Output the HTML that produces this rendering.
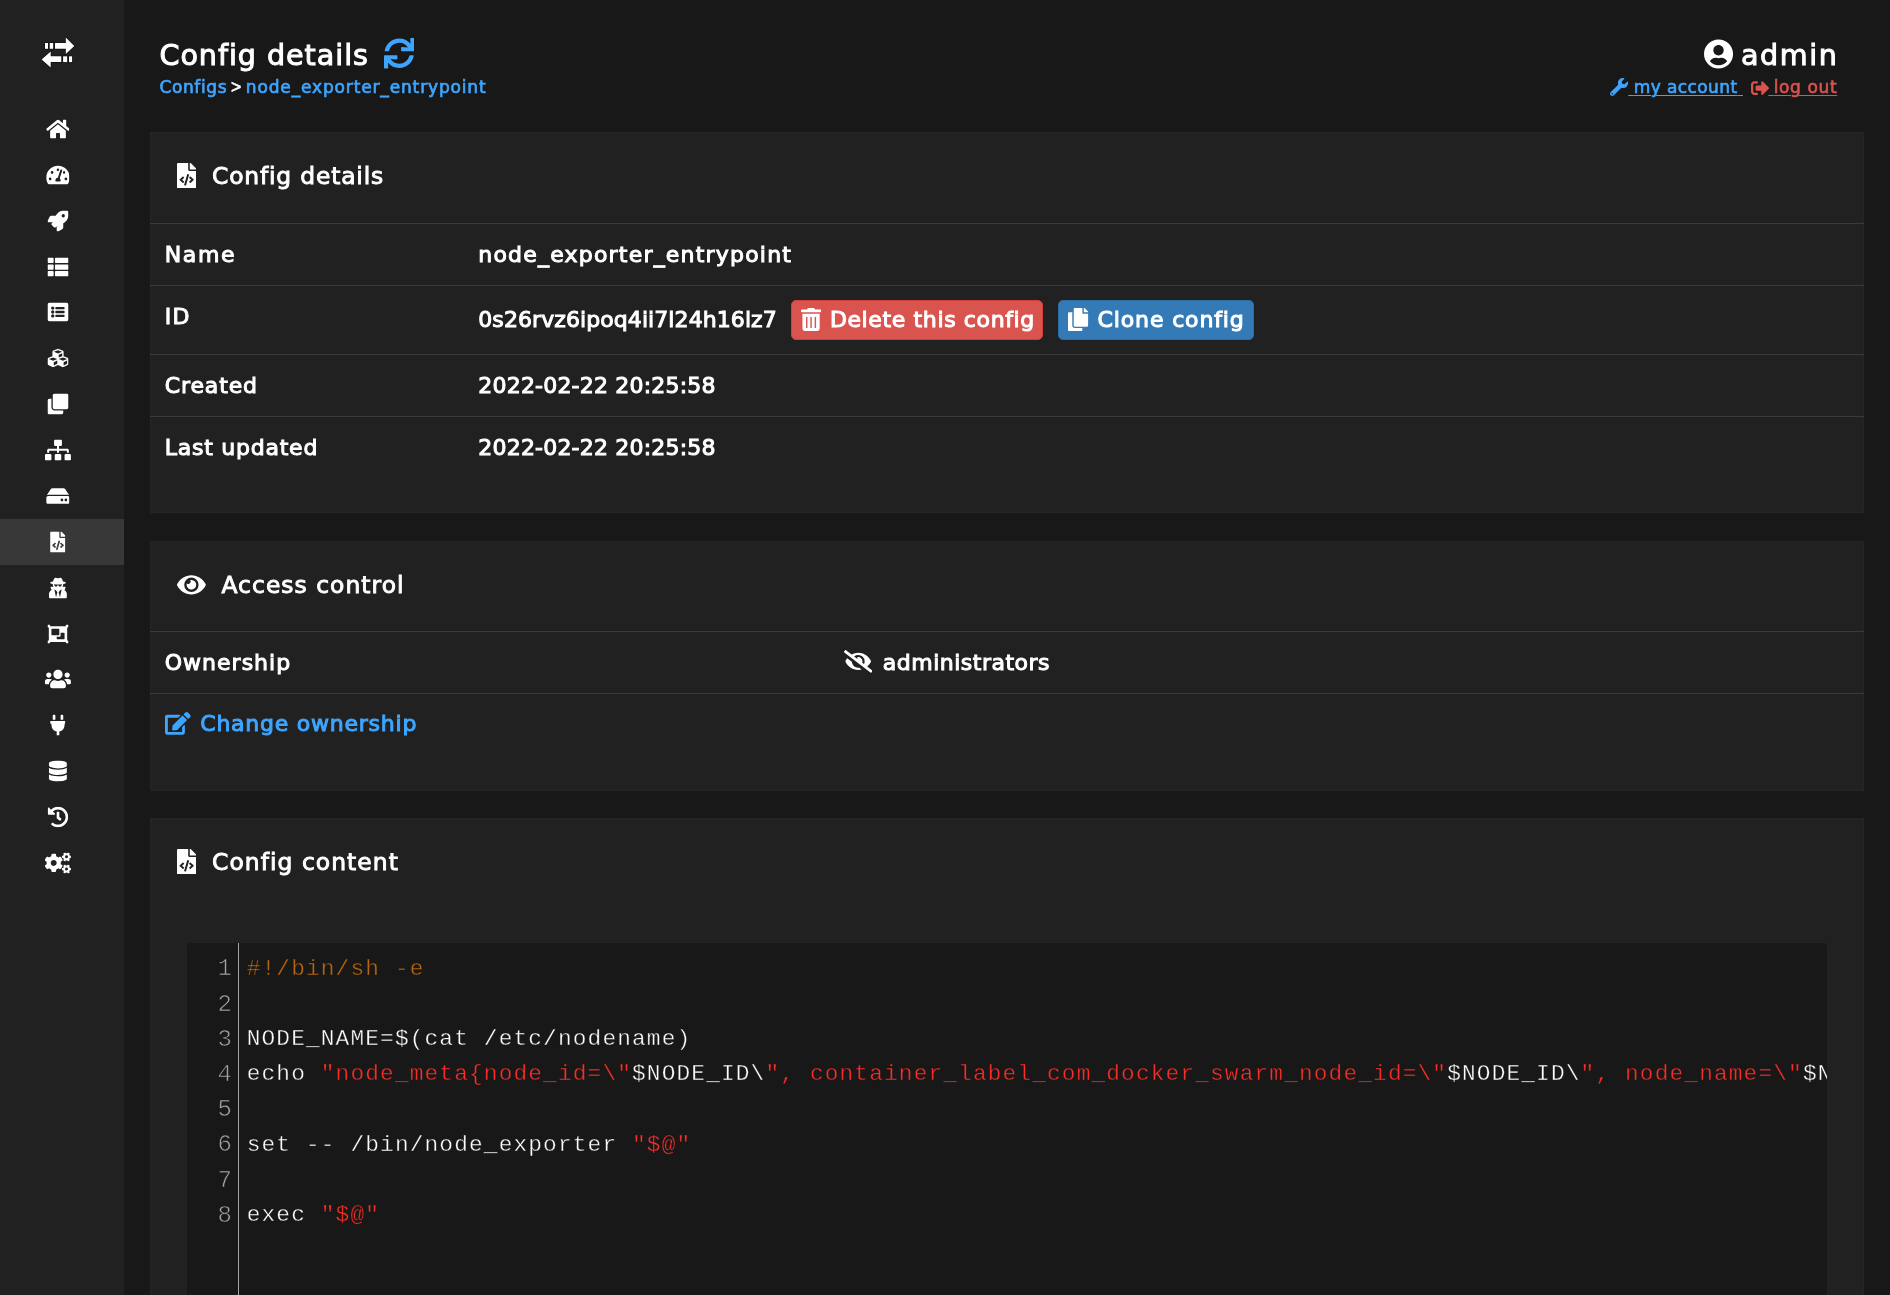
<!DOCTYPE html>
<html lang="en">
<head>
<meta charset="utf-8">
<title>Config details</title>
<style>
*{box-sizing:border-box}
html,body{margin:0;padding:0}
body{width:1890px;height:1295px;overflow:hidden;background:#181818;color:#fff;will-change:transform;
  font-family:"DejaVu Sans","Liberation Sans",sans-serif;font-size:22.75px;line-height:1.42857}
a{color:#3ea5ff;text-decoration:none}
svg{display:block}
/* ---------- sidebar ---------- */
#sidebar{position:absolute;left:0;top:0;width:124px;height:1295px;background:#212121}
#sidebar .logo{position:absolute;left:34px;top:30px;width:50px;height:46px}
#sidebar ul{list-style:none;margin:0;padding:0;position:absolute;left:0;top:106px;width:124px}
#sidebar li{height:45.875px;position:relative}
#sidebar li.active{background:#383838}
#sidebar li a{display:block;height:100%}
#sidebar li svg{position:absolute;left:50%;top:50%;transform:translate(-50%,-50%);margin-left:-4.5px}
/* ---------- header ---------- */
#main{position:absolute;left:124px;top:0;width:1766px;height:1295px}
#header{position:absolute;left:0;top:0;width:1766px;height:132px}
#header h1{position:absolute;left:35.5px;top:34px;margin:0;font-weight:400;font-size:28.6px;line-height:42px;letter-spacing:.95px;white-space:nowrap;-webkit-text-stroke:1px #fff}
#header h1 svg{position:absolute;left:224.2px;top:4.3px}
#header .crumbs{position:absolute;left:35.5px;top:74.4px;font-size:17px;line-height:26px;white-space:nowrap;-webkit-text-stroke:.7px}
#header .crumbs .sep{display:inline-block;margin:0 4.5px 0 4px;font-family:"Liberation Sans",sans-serif;font-size:17.5px;-webkit-text-stroke:.6px;color:#fff}
#header .user{position:absolute;left:0;top:0;width:1766px;height:132px;white-space:nowrap}
#header .user .name{position:absolute;left:1579.5px;top:34px;font-size:28.6px;line-height:42px;-webkit-text-stroke:1px #fff}
#header .user .name svg{position:absolute;left:0;top:4.5px}
#header .user .name span{position:absolute;left:37.5px;top:0;letter-spacing:1.6px}
#header .user .links a{position:absolute;top:74.4px;font-size:17px;line-height:26px;white-space:pre;text-decoration:underline;text-decoration-thickness:1.3px;text-underline-offset:2.2px;-webkit-text-stroke:.65px}
#header .user .links a svg{position:absolute;top:4px}
#header .user .links a.acc{left:1504.3px}
#header .user .links a.acc svg{left:-18.5px}
#header .user .links a.out{left:1644.3px;color:#d9534f}
#header .user .links a.out svg{left:-17.5px;top:5px}
/* ---------- panels ---------- */
.panel{position:absolute;left:25.5px;width:1714.5px;background:#212121;box-shadow:inset 0 0 0 1.5px #252525}
.panel .hd{height:92.4px;border-bottom:1px solid #3a3a3a;position:relative;font-size:23.4px;letter-spacing:.75px;-webkit-text-stroke:.9px #fff}
.panel .hd svg{position:absolute;left:27.5px;top:31px}
.panel .hd span{position:absolute;left:62.5px;top:27.4px;white-space:nowrap;line-height:34px}
table{border-collapse:collapse;width:100%;table-layout:fixed}
td{padding:0 0 0 15.3px;vertical-align:top;font-weight:400;font-size:22px;letter-spacing:.7px;-webkit-text-stroke:1px;white-space:nowrap;border-bottom:1px solid #3a3a3a}
tr:last-child td{border-bottom:0}
td .t{display:inline-block;line-height:32px;margin-top:14.6px}
td .t.id{margin-top:17.4px}
td{position:relative}
td svg.es{position:absolute;left:16.5px;top:18.5px}
td svg.ed{position:absolute;left:15.5px;top:17.5px}
.hd svg.fc3{top:30.3px}
.hd svg.eye{top:30.4px;left:27.5px}
.btn{position:absolute;top:14px;height:40px;border-radius:5px;color:#fff;font-weight:400;font-size:22px;-webkit-text-stroke:1.05px #fff;line-height:38px;border:1px solid transparent;white-space:nowrap}
.btn svg{position:absolute;left:9px;top:6.6px}
.btn span{position:absolute;left:38.2px;top:-.7px}
.btn-danger{background:#d9534f;border-color:#d43f3a}
.btn-primary{background:#337ab7;border-color:#2e6da4}
/* ---------- code ---------- */
.cm{position:absolute;left:37px;top:124.2px;width:1640.5px;height:400px;background:#181818;overflow:hidden;border-radius:4px 4px 0 0}
.cm .gutter{position:absolute;left:0;top:0;width:52px;height:100%;border-right:1px solid #a6a6a6;background:#181818}
.cm ol{list-style:none;margin:0;padding:9.2px 0 0 0}
.cm li{height:35.2px;position:relative;white-space:pre}
.cm li i{position:absolute;left:0;width:45.4px;text-align:right;font-style:normal;color:#a2a2a2;font-family:"Liberation Mono",monospace;font-size:24px;line-height:35.2px;top:-.4px;-webkit-text-stroke:.65px #181818}
.cm li code{position:absolute;left:60.2px;top:0;font-family:"Liberation Mono",monospace;font-size:22.8px;letter-spacing:1.14px;line-height:35.2px;color:#fff;-webkit-text-stroke:.4px #181818}
.cm .c{color:#b9650d}
.cm .s{color:#fb2d27}
</style>
</head>
<body>
<aside id="sidebar">
  <a class="logo" title="Swarmpit">
    <svg width="50" height="46" viewBox="34 30 50 46">
      <g fill="#fff" stroke="#0c0c0c" stroke-width="1.2" paint-order="stroke" stroke-linejoin="miter">
        <rect x="45" y="43" width="3" height="5.8"/>
        <rect x="49.7" y="43" width="3.5" height="5.8"/>
        <path d="M55 43H65.8V37.6L74.3 45.9L65.8 53.9V48.8H55Z"/>
        <path d="M41.6 59.4L50.7 51.5V56.3H61.3V62.1H50.7V67.5Z"/>
        <rect x="63.1" y="56.3" width="4.1" height="5.8"/>
        <rect x="69" y="56.3" width="3.1" height="5.8"/>
      </g>
    </svg>
  </a>
  <ul>
    <li><a><svg viewBox="0 0 576 512" width="23.62" height="21.0"><path fill="#fff" d="M280.37 148.26L96 300.11V464a16 16 0 0 0 16 16l112.06-.29a16 16 0 0 0 15.92-16V368a16 16 0 0 1 16-16h64a16 16 0 0 1 16 16v95.64a16 16 0 0 0 16 16.05L464 480a16 16 0 0 0 16-16V300L295.67 148.26a12.19 12.19 0 0 0-15.3 0zM571.6 251.47L488 182.56V44.05a12 12 0 0 0-12-12h-56a12 12 0 0 0-12 12v72.61L318.47 43a48 48 0 0 0-61 0L4.34 251.47a12 12 0 0 0-1.6 16.9l25.5 31A12 12 0 0 0 45.15 301l235.22-193.74a12.19 12.19 0 0 1 15.3 0L530.9 301a12 12 0 0 0 16.9-1.6l25.5-31a12 12 0 0 0-1.7-16.93z"/></svg></a></li>
    <li><a><svg viewBox="0 0 576 512" width="23.62" height="21.0"><path fill="#fff" d="M288 32C128.94 32 0 160.94 0 320c0 52.8 14.25 102.26 39.06 144.8 5.61 9.62 16.3 15.2 27.44 15.2h443c11.14 0 21.83-5.58 27.44-15.2C561.75 422.26 576 372.8 576 320c0-159.06-128.94-288-288-288zm0 64c14.71 0 26.58 10.13 30.32 23.65-1.11 2.26-2.64 4.23-3.45 6.67l-9.22 27.67c-5.13 3.49-10.97 6.01-17.64 6.01-17.67 0-32-14.33-32-32S270.33 96 288 96zM96 384c-17.67 0-32-14.33-32-32s14.33-32 32-32 32 14.33 32 32-14.33 32-32 32zm48-160c-17.67 0-32-14.33-32-32s14.33-32 32-32 32 14.33 32 32-14.33 32-32 32zm246.77-72.41l-61.33 184C343.13 347.33 352 364.54 352 384c0 11.72-3.38 22.55-8.88 32H232.88c-5.5-9.45-8.88-20.28-8.880-32 0-33.940 26.500-61.430 59.900-63.590l61.340-184.010c4.170-12.560 17.730-19.450 30.360-15.170 12.570 4.190 19.350 17.790 15.170 30.360zm14.660 57.200l15.520-46.550c3.470-1.290 7.130-2.230 11.050-2.230 17.670 0 32 14.330 32 32s-14.330 32-32 32c-11.380-.010-20.890-6.280-26.570-15.220zM480 384c-17.670 0-32-14.330-32-32s14.330-32 32-32 32 14.330 32 32-14.330 32-32 32z"/></svg></a></li>
    <li><a><svg viewBox="0 0 512 512" width="21.0" height="21.0"><path fill="#fff" d="M505.12019,19.09375c-1.18945-5.53125-6.65819-11-12.207-12.1875C460.716,0,435.507,0,410.40747,0,307.17523,0,245.26909,55.20312,199.05238,128H94.83772c-16.34763.01562-35.55658,11.875-42.88664,26.48438L2.51562,253.29688A28.4,28.4,0,0,0,0,264a24.00867,24.00867,0,0,0,24.00582,24H127.81618l-22.47457,22.46875c-11.36521,11.36133-12.99607,32.25781,0,45.25L156.24582,406.625c11.15623,11.1875,32.15619,13.15625,45.27726,0l22.47457-22.46875V488a24.00867,24.00867,0,0,0,24.00581,24,28.55934,28.55934,0,0,0,10.707-2.51562l98.72834-49.39063c14.62888-7.29687,26.50776-26.5,26.50776-42.85937V312.79688c72.59753-46.3125,128.03493-108.40626,128.03493-211.09376C512.07526,76.5,512.07526,51.29688,505.12019,19.09375ZM384.04033,168A40,40,0,1,1,424.05,128,40.02322,40.02322,0,0,1,384.04033,168Z"/></svg></a></li>
    <li><a><svg viewBox="0 0 512 512" width="21.0" height="21.0"><path fill="#fff" d="M149.333 216v80c0 13.255-10.745 24-24 24H24c-13.255 0-24-10.745-24-24v-80c0-13.255 10.745-24 24-24h101.333c13.255 0 24 10.745 24 24zM0 376v80c0 13.255 10.745 24 24 24h101.333c13.255 0 24-10.745 24-24v-80c0-13.255-10.745-24-24-24H24c-13.255 0-24 10.745-24 24zM125.333 32H24C10.745 32 0 42.745 0 56v80c0 13.255 10.745 24 24 24h101.333c13.255 0 24-10.745 24-24V56c0-13.255-10.745-24-24-24zm80 448H488c13.255 0 24-10.745 24-24v-80c0-13.255-10.745-24-24-24H205.333c-13.255 0-24 10.745-24 24v80c0 13.255 10.745 24 24 24zm-24-424v80c0 13.255 10.745 24 24 24H488c13.255 0 24-10.745 24-24V56c0-13.255-10.745-24-24-24H205.333c-13.255 0-24 10.745-24 24zm24 264H488c13.255 0 24-10.745 24-24v-80c0-13.255-10.745-24-24-24H205.333c-13.255 0-24 10.745-24 24v80c0 13.255 10.745 24 24 24z"/></svg></a></li>
    <li><a><svg viewBox="0 0 512 512" width="21.0" height="21.0"><path fill="#fff" d="M464 480H48c-26.51 0-48-21.49-48-48V80c0-26.51 21.49-48 48-48h416c26.51 0 48 21.49 48 48v352c0 26.51-21.49 48-48 48zM128 120c-22.091 0-40 17.909-40 40s17.909 40 40 40 40-17.909 40-40-17.909-40-40-40zm0 96c-22.091 0-40 17.909-40 40s17.909 40 40 40 40-17.909 40-40-17.909-40-40-40zm0 96c-22.091 0-40 17.909-40 40s17.909 40 40 40 40-17.909 40-40-17.909-40-40-40zm288-136v-32c0-6.627-5.373-12-12-12H204c-6.627 0-12 5.373-12 12v32c0 6.627 5.373 12 12 12h200c6.627 0 12-5.373 12-12zm0 96v-32c0-6.627-5.373-12-12-12H204c-6.627 0-12 5.373-12 12v32c0 6.627 5.373 12 12 12h200c6.627 0 12-5.373 12-12zm0 96v-32c0-6.627-5.373-12-12-12H204c-6.627 0-12 5.373-12 12v32c0 6.627 5.373 12 12 12h200c6.627 0 12-5.373 12-12z"/></svg></a></li>
    <li><a><svg viewBox="0 0 512 512" width="21.0" height="21.0"><path fill="#fff" d="M488.6 250.2L392 214V105.5c0-15-9.3-28.4-23.4-33.7l-100-37.5c-8.1-3.1-17.1-3.1-25.3 0l-100 37.5c-14.1 5.3-23.4 18.7-23.4 33.7V214l-96.6 36.2C9.3 255.5 0 268.9 0 283.9V394c0 13.6 7.7 26.1 19.9 32.2l100 50c10.1 5.1 22.1 5.1 32.2 0l103.9-52 103.9 52c10.1 5.1 22.1 5.1 32.2 0l100-50c12.2-6.1 19.9-18.6 19.900-32.200V283.900c0-15-9.300-28.400-23.400-33.700zM358 214.800l-85 31.900v-68.200l85-37v73.300zM154 104.100l102-38.200 102 38.200v.6l-102 41.400-102-41.400v-.6zm84 291.100l-85 42.500v-79.100l85-38.800v75.400zm0-112l-102 41.400-102-41.400v-.6l102-38.200 102 38.200v.6zm240 112l-85 42.500v-79.100l85-38.800v75.400zm0-112l-102 41.400-102-41.400v-.6l102-38.200 102 38.200v.6z"/></svg></a></li>
    <li><a><svg viewBox="0 0 512 512" width="21.0" height="21.0"><path fill="#fff" d="M464 0c26.51 0 48 21.49 48 48v288c0 26.51-21.49 48-48 48H176c-26.51 0-48-21.49-48-48V48c0-26.51 21.49-48 48-48h288M176 416c-44.112 0-80-35.888-80-80V128H48c-26.51 0-48 21.49-48 48v288c0 26.51 21.49 48 48 48h288c26.51 0 48-21.49 48-48v-48H176z"/></svg></a></li>
    <li><a><svg viewBox="0 0 640 512" width="26.25" height="21.0"><path fill="#fff" d="M128 352H32c-17.67 0-32 14.33-32 32v96c0 17.67 14.33 32 32 32h96c17.67 0 32-14.33 32-32v-96c0-17.67-14.33-32-32-32zm-24-80h192v48h48v-48h192v48h48v-57.59c0-21.17-17.23-38.41-38.41-38.41H344v-64h40c17.67 0 32-14.33 32-32V32c0-17.67-14.33-32-32-32H256c-17.67 0-32 14.33-32 32v96c0 17.67 14.33 32 32 32h40v64H94.41C73.23 224 56 241.23 56 262.41V320h48v-48zm264 80h-96c-17.67 0-32 14.33-32 32v96c0 17.67 14.33 32 32 32h96c17.67 0 32-14.33 32-32v-96c0-17.67-14.33-32-32-32zm240 0h-96c-17.67 0-32 14.33-32 32v96c0 17.67 14.33 32 32 32h96c17.67 0 32-14.33 32-32v-96c0-17.67-14.33-32-32-32z"/></svg></a></li>
    <li><a><svg viewBox="0 0 576 512" width="23.62" height="21.0"><path fill="#fff" d="M576 304v96c0 26.51-21.49 48-48 48H48c-26.51 0-48-21.49-48-48v-96c0-26.51 21.49-48 48-48h480c26.51 0 48 21.49 48 48zm-48-80a79.557 79.557 0 0 1 30.777 6.165L462.25 85.374A48.003 48.003 0 0 0 422.311 64H153.689a48 48 0 0 0-39.938 21.374L17.223 230.165A79.557 79.557 0 0 1 48 224h480zm-48 96c-17.673 0-32 14.327-32 32s14.327 32 32 32 32-14.327 32-32-14.327-32-32-32zm-96 0c-17.673 0-32 14.327-32 32s14.327 32 32 32 32-14.327 32-32-14.327-32-32-32z"/></svg></a></li>
    <li class="active"><a><svg viewBox="0 0 384 512" width="15.75" height="21.0"><path fill="#fff" d="M384 121.941V128H256V0h6.059c6.365 0 12.47 2.529 16.971 7.029l97.941 97.941A24.005 24.005 0 0 1 384 121.941zM248 160c-13.2 0-24-10.8-24-24V0H24C10.745 0 0 10.745 0 24v464c0 13.255 10.745 24 24 24h336c13.255 0 24-10.745 24-24V160H248zM123.206 400.505a5.4 5.4 0 0 1-7.633.246l-64.866-60.812a5.4 5.4 0 0 1 0-7.879l64.866-60.812a5.4 5.4 0 0 1 7.633.246l19.579 20.885a5.4 5.4 0 0 1-.372 7.747L101.65 336l40.763 35.874a5.4 5.4 0 0 1 .372 7.747l-19.579 20.884zm51.295 50.479l-27.453-7.97a5.402 5.402 0 0 1-3.681-6.692l61.44-211.626a5.402 5.402 0 0 1 6.692-3.681l27.452 7.97a5.4 5.4 0 0 1 3.68 6.692l-61.44 211.626a5.397 5.397 0 0 1-6.69 3.681zm160.792-111.045l-64.866 60.812a5.4 5.4 0 0 1-7.633-.246l-19.58-20.885a5.4 5.4 0 0 1 .372-7.747L284.35 336l-40.763-35.874a5.4 5.4 0 0 1-.372-7.747l19.58-20.885a5.4 5.4 0 0 1 7.633-.246l64.866 60.812a5.4 5.4 0 0 1-.001 7.879z"/></svg></a></li>
    <li><a><svg viewBox="0 0 448 512" width="18.38" height="21.0"><path fill="#fff" d="M383.9 308.3l23.9-62.6c4-10.5-3.7-21.7-15-21.700h-58.500c11-18.900 17.800-40.600 17.800-64v-.3c39.200-7.800 64-19.100 64-31.700 0-13.300-27.300-25.100-70.100-33-9.200-32.800-27-65.800-40.600-82.800-9.500-11.900-25.900-15.600-39.500-8.800l-27.600 13.800c-9 4.500-19.600 4.500-28.600 0L182.100 3.400c-13.600-6.800-30-3.100-39.500 8.800-13.500 17-31.400 50-40.600 82.800-42.700 7.900-70 19.700-70 33 0 12.600 24.800 23.900 64 31.700v.3c0 23.400 6.800 45.100 17.800 64H56.300c-11.500 0-19.200 11.700-14.700 22.300l25.800 60.200C27.300 329.800 0 372.700 0 422.400v44.800C0 491.900 20.100 512 44.800 512h358.400c24.700 0 44.800-20.100 44.800-44.800v-44.800c0-48.400-25.800-90.400-64.100-114.100zM176 480l-41.600-192 49.600 32 24 40-32 120zm96 0l-32-120 24-40 49.600-32L272 480zm41.700-298.500c-3.900 11.900-7 24.600-16.500 33.400-10.100 9.300-48 22.400-64-25-2.800-8.400-15.400-8.400-18.300 0-17 50.200-56 32.400-64 25-9.500-8.800-12.700-21.500-16.500-33.400-.8-2.500-6.300-5.700-6.300-5.800v-10.800c28.300 3.600 61 5.800 96 5.800s67.700-2.100 96-5.800v10.800c-.1.100-5.600 3.200-6.400 5.800z"/></svg></a></li>
    <li><a><svg viewBox="0 0 512 512" width="21.0" height="21.0"><path fill="#fff" d="M480 128V96h20c6.627 0 12-5.373 12-12V44c0-6.627-5.373-12-12-12h-40c-6.627 0-12 5.373-12 12v20H64V44c0-6.627-5.373-12-12-12H12C5.373 32 0 37.373 0 44v40c0 6.627 5.373 12 12 12h20v320H12c-6.627 0-12 5.373-12 12v40c0 6.627 5.373 12 12 12h40c6.627 0 12-5.373 12-12v-20h384v20c0 6.627 5.373 12 12 12h40c6.627 0 12-5.373 12-12v-40c0-6.627-5.373-12-12-12h-20V128zM96 276V140c0-6.627 5.373-12 12-12h168c6.627 0 12 5.373 12 12v136c0 6.627-5.373 12-12 12H108c-6.627 0-12-5.373-12-12zm320 96c0 6.627-5.373 12-12 12H236c-6.627 0-12-5.373-12-12v-52h72c13.255 0 24-10.745 24-24v-72h84c6.627 0 12 5.373 12 12v136z"/></svg></a></li>
    <li><a><svg viewBox="0 0 640 512" width="26.25" height="21.0"><path fill="#fff" d="M96 224c35.3 0 64-28.7 64-64s-28.7-64-64-64-64 28.7-64 64 28.7 64 64 64zm448 0c35.3 0 64-28.7 64-64s-28.7-64-64-64-64 28.7-64 64 28.7 64 64 64zm32 32h-64c-17.6 0-33.5 7.1-45.1 18.6 40.3 22.1 68.9 62 75.1 109.4h66c17.7 0 32-14.3 32-32v-32c0-35.3-28.7-64-64-64zm-256 0c61.9 0 112-50.1 112-112S381.9 32 320 32 208 82.1 208 144s50.1 112 112 112zm76.8 32h-8.3c-20.8 10-43.9 16-68.5 16s-47.6-6-68.500-16h-8.300C179.600 288 128 339.600 128 403.200V432c0 26.500 21.500 48 48 48h288c26.500 0 48-21.500 48-48v-28.800c0-63.600-51.600-115.200-115.200-115.200zm-223.700-13.400C161.500 263.100 145.600 256 128 256H64c-35.300 0-64 28.700-64 64v32c0 17.700 14.300 32 32 32h65.900c6.300-47.400 34.900-87.300 75.200-109.400z"/></svg></a></li>
    <li><a><svg viewBox="0 0 384 512" width="15.75" height="21.0"><path fill="#fff" d="M320,32a32,32,0,0,0-64,0v96h64Zm48,128H16A16,16,0,0,0,0,176v32a16,16,0,0,0,16,16H32v32A160.07,160.07,0,0,0,160,412.8V512h64V412.8A160.07,160.07,0,0,0,352,256V224h16a16,16,0,0,0,16-16V176A16,16,0,0,0,368,160ZM128,32a32,32,0,0,0-64,0v96h64Z"/></svg></a></li>
    <li><a><svg viewBox="0 0 448 512" width="18.38" height="21.0"><path fill="#fff" d="M448 73.143v45.714C448 159.143 347.667 192 224 192S0 159.143 0 118.857V73.143C0 32.857 100.333 0 224 0s224 32.857 224 73.143zM448 176v102.857C448 319.143 347.667 352 224 352S0 319.143 0 278.857V176c48.125 33.143 136.208 48.572 224 48.572S399.874 209.143 448 176zm0 160v102.857C448 479.143 347.667 512 224 512S0 479.143 0 438.857V336c48.125 33.143 136.208 48.572 224 48.572S399.874 369.143 448 336z"/></svg></a></li>
    <li><a><svg viewBox="0 0 512 512" width="21.0" height="21.0"><path fill="#fff" d="M504 255.531c.253 136.64-111.18 248.372-247.82 248.468-59.015.042-113.223-20.53-155.822-54.911-11.077-8.94-11.905-25.541-1.839-35.607l11.267-11.267c8.609-8.609 22.353-9.551 31.891-1.984C173.062 425.135 212.781 440 256 440c101.705 0 184-82.311 184-184 0-101.705-82.311-184-184-184-48.814 0-93.149 18.969-126.068 49.932l50.754 50.754c10.08 10.08 2.941 27.314-11.313 27.314H24c-8.837 0-16-7.163-16-16V38.627c0-14.254 17.234-21.393 27.314-11.314l49.372 49.372C129.209 34.136 189.552 8 256 8c136.81 0 247.747 110.78 248 247.531zm-180.912 78.784l9.823-12.63c8.138-10.463 6.253-25.542-4.21-33.679L288 256.349V152c0-13.255-10.745-24-24-24h-16c-13.255 0-24 10.745-24 24v135.651l65.409 50.874c10.463 8.137 25.541 6.253 33.679-4.21z"/></svg></a></li>
    <li><a><svg viewBox="0 0 640 512" width="26.25" height="21.0"><path fill="#fff" d="M512.1 191l-8.2 14.3c-3 5.3-9.4 7.5-15.1 5.4-11.8-4.4-22.6-10.7-32.1-18.6-4.6-3.8-5.8-10.5-2.8-15.7l8.2-14.3c-6.9-8-12.3-17.3-15.9-27.4h-16.5c-6 0-11.2-4.3-12.2-10.3-2-12-2.1-24.600 0-37.100 1-6 6.200-10.400 12.200-10.400h16.500c3.600-10.100 9-19.400 15.900-27.400l-8.200-14.300c-3-5.200-1.900-11.900 2.800-15.700 9.500-7.900 20.400-14.200 32.100-18.600 5.700-2.100 12.100.1 15.100 5.400l8.200 14.300c10.500-1.900 21.200-1.900 31.700 0L552 6.300c3-5.300 9.400-7.500 15.100-5.400 11.800 4.400 22.600 10.700 32.100 18.600 4.600 3.800 5.800 10.500 2.800 15.700l-8.200 14.300c6.900 8 12.300 17.300 15.900 27.400h16.500c6 0 11.200 4.300 12.200 10.300 2 12 2.100 24.600 0 37.100-1 6-6.200 10.400-12.200 10.400h-16.500c-3.600 10.100-9 19.400-15.900 27.400l8.200 14.300c3 5.200 1.900 11.900-2.800 15.700-9.500 7.900-20.400 14.200-32.100 18.600-5.700 2.100-12.100-.1-15.100-5.400l-8.200-14.300c-10.400 1.900-21.200 1.900-31.700 0zm-10.500-58.800c38.500 29.600 82.400-14.300 52.800-52.800-38.500-29.700-82.400 14.300-52.800 52.800zM386.300 286.100l33.700 16.800c10.100 5.800 14.500 18.100 10.500 29.100-8.900 24.200-26.400 46.400-42.600 65.800-7.400 8.900-20.200 11.100-30.300 5.300l-29.100-16.800c-16 13.700-34.600 24.600-54.900 31.700v33.600c0 11.600-8.300 21.600-19.700 23.600-24.600 4.200-50.400 4.400-75.900 0-11.500-2-20-11.900-20-23.600V418c-20.300-7.200-38.900-18-54.900-31.700L74 403c-10 5.800-22.900 3.600-30.300-5.300-16.200-19.400-33.300-41.600-42.200-65.700-4-10.900.4-23.200 10.500-29.100l33.300-16.800c-3.900-20.900-3.900-42.400 0-63.400L12 205.800c-10.100-5.800-14.600-18.100-10.500-29 8.900-24.200 26-46.400 42.200-65.800 7.400-8.900 20.200-11.100 30.300-5.300l29.100 16.800c16-13.700 34.600-24.600 54.900-31.700V57.100c0-11.500 8.200-21.500 19.600-23.500 24.600-4.200 50.500-4.400 76-.1 11.500 2 20 11.900 20 23.600v33.600c20.300 7.200 38.900 18 54.900 31.700l29.100-16.800c10-5.800 22.900-3.600 30.300 5.300 16.200 19.400 33.200 41.600 42.100 65.800 4 10.900.1 23.200-10 29.100l-33.700 16.800c3.900 21 3.900 42.500 0 63.500zm-117.600 21.100c59.200-77-28.700-164.900-105.700-105.700-59.200 77 28.700 164.900 105.700 105.700zm243.400 182.700l-8.200 14.300c-3 5.300-9.400 7.500-15.100 5.400-11.800-4.400-22.600-10.700-32.100-18.600-4.600-3.800-5.800-10.500-2.800-15.700l8.200-14.300c-6.900-8-12.300-17.300-15.900-27.400h-16.500c-6 0-11.200-4.300-12.200-10.300-2-12-2.100-24.600 0-37.100 1-6 6.200-10.400 12.200-10.400h16.500c3.600-10.100 9-19.400 15.900-27.400l-8.200-14.300c-3-5.200-1.900-11.900 2.800-15.700 9.500-7.900 20.400-14.200 32.100-18.600 5.700-2.100 12.100.1 15.100 5.400l8.200 14.300c10.500-1.900 21.200-1.900 31.700 0l8.200-14.300c3-5.300 9.400-7.500 15.100-5.400 11.800 4.400 22.600 10.700 32.100 18.600 4.600 3.800 5.800 10.500 2.800 15.700l-8.200 14.300c6.900 8 12.300 17.300 15.900 27.400h16.500c6 0 11.200 4.300 12.200 10.300 2 12 2.100 24.600 0 37.100-1 6-6.200 10.400-12.200 10.400h-16.500c-3.600 10.100-9 19.400-15.900 27.400l8.200 14.300c3 5.200 1.900 11.900-2.800 15.700-9.500 7.900-20.400 14.200-32.100 18.600-5.700 2.100-12.100-.1-15.100-5.400l-8.200-14.300c-10.400 1.900-21.200 1.900-31.700 0zM501.600 431c38.500 29.600 82.400-14.300 52.800-52.800-38.500-29.600-82.400 14.300-52.800 52.800z"/></svg></a></li>
  </ul>
</aside>
<div id="main">
  <header id="header">
    <h1><span id="t-title">Config details</span><svg viewBox="0 0 512 512" width="30.5" height="30.5"><path fill="#3ea5ff" d="M440.65 12.57l4 82.77A247.16 247.16 0 0 0 255.83 8C134.73 8 33.91 94.92 12.29 209.82A12 12 0 0 0 24.09 224h49.05a12 12 0 0 0 11.67-9.26 175.91 175.91 0 0 1 317-56.94l-101.46-4.86a12 12 0 0 0-12.57 12v47.41a12 12 0 0 0 12 12H500a12 12 0 0 0 12-12V12a12 12 0 0 0-12-12h-47.37a12 12 0 0 0-11.98 12.57zM255.83 432a175.61 175.61 0 0 1-146-77.8l101.8 4.87a12 12 0 0 0 12.57-12v-47.4a12 12 0 0 0-12-12H12a12 12 0 0 0-12 12V500a12 12 0 0 0 12 12h47.35a12 12 0 0 0 12-12.6l-4.15-82.57A247.17 247.17 0 0 0 255.83 504c121.11 0 221.93-86.92 243.55-201.82a12 12 0 0 0-11.8-14.18h-49.05a12 12 0 0 0-11.67 9.26A175.86 175.86 0 0 1 255.83 432z"/></svg></h1>
    <div class="crumbs"><a id="t-c1" style="letter-spacing:.6px">Configs</a><span class="sep">&gt;</span><a id="t-c2" style="letter-spacing:.85px">node_exporter_entrypoint</a></div>
    <div class="user">
      <div class="name"><svg viewBox="0 0 496 512" width="29.06" height="30.0"><path fill="#fff" d="M248 8C111 8 0 119 0 256s111 248 248 248 248-111 248-248S385 8 248 8zm0 96c48.6 0 88 39.4 88 88s-39.4 88-88 88-88-39.4-88-88 39.4-88 88-88zm0 344c-58.7 0-111.3-26.6-146.5-68.2 18.8-35.4 55.6-59.8 98.5-59.8 2.4 0 4.8.4 7.1 1.1 13 4.2 26.6 6.9 40.9 6.9 14.3 0 28-2.7 40.9-6.9 2.3-.7 4.7-1.1 7.1-1.1 42.9 0 79.7 24.4 98.5 59.8C359.3 421.4 306.7 448 248 448z"/></svg><span id="t-admin">admin</span></div>
      <div class="links"><a class="acc"><svg viewBox="0 0 512 512" width="18.0" height="18.0"><path fill="#3ea5ff" d="M507.73 109.1c-2.24-9.03-13.54-12.09-20.12-5.51l-74.36 74.36-67.88-11.31-11.31-67.88 74.36-74.36c6.62-6.62 3.43-17.9-5.66-20.16-47.38-11.74-99.55.91-136.58 37.93-39.64 39.64-50.55 97.1-34.05 147.2L18.74 402.76c-24.99 24.99-24.99 65.51 0 90.5 24.99 24.99 65.51 24.99 90.5 0l213.21-213.21c50.12 16.71 107.47 5.68 147.37-34.22 37.07-37.07 49.7-89.32 37.91-136.73zM64 472c-13.25 0-24-10.75-24-24 0-13.26 10.75-24 24-24s24 10.74 24 24c0 13.25-10.75 24-24 24z"/></svg> <span id="t-acc" style="letter-spacing:.4px">my account</span> </a><a class="out"><svg viewBox="0 0 512 512" width="18.3" height="18.3"><path fill="#d9534f" d="M497 273L329 441c-15 15-41 4.5-41-17v-96H152c-13.3 0-24-10.7-24-24v-96c0-13.3 10.7-24 24-24h136V88c0-21.4 25.9-32 41-17l168 168c9.3 9.4 9.3 24.6 0 34zM192 436v-40c0-6.6-5.4-12-12-12H96c-17.7 0-32-14.3-32-32V160c0-17.7 14.3-32 32-32h84c6.6 0 12-5.4 12-12V76c0-6.600-5.400-12-12-12H96c-53 0-96 43-96 96v192c0 53 43 96 96 96h84c6.600 0 12-5.400 12-12z"/></svg> <span id="t-out" style="letter-spacing:.63px">log out</span></a></div>
    </div>
  </header>

  <section class="panel" style="top:131.6px;height:381.8px">
    <div class="hd"><svg viewBox="0 0 384 512" width="19.2" height="25.6"><path fill="#fff" d="M384 121.941V128H256V0h6.059c6.365 0 12.47 2.529 16.971 7.029l97.941 97.941A24.005 24.005 0 0 1 384 121.941zM248 160c-13.2 0-24-10.8-24-24V0H24C10.745 0 0 10.745 0 24v464c0 13.255 10.745 24 24 24h336c13.255 0 24-10.745 24-24V160H248zM123.206 400.505a5.4 5.4 0 0 1-7.633.246l-64.866-60.812a5.4 5.4 0 0 1 0-7.879l64.866-60.812a5.4 5.4 0 0 1 7.633.246l19.579 20.885a5.4 5.4 0 0 1-.372 7.747L101.65 336l40.763 35.874a5.4 5.4 0 0 1 .372 7.747l-19.579 20.884zm51.295 50.479l-27.453-7.97a5.402 5.402 0 0 1-3.681-6.692l61.44-211.626a5.402 5.402 0 0 1 6.692-3.681l27.452 7.97a5.4 5.4 0 0 1 3.68 6.692l-61.44 211.626a5.397 5.397 0 0 1-6.69 3.681zm160.792-111.045l-64.866 60.812a5.4 5.4 0 0 1-7.633-.246l-19.58-20.885a5.4 5.4 0 0 1 .372-7.747L284.35 336l-40.763-35.874a5.4 5.4 0 0 1-.372-7.747l19.58-20.885a5.4 5.4 0 0 1 7.633-.246l64.866 60.812a5.4 5.4 0 0 1-.001 7.879z"/></svg><span id="t-h1" style="letter-spacing:0.83px">Config details</span></div>
    <table>
      <colgroup><col style="width:313.5px"><col></colgroup>
      <tr style="height:62px"><td><span class="t" id="t-name" style="letter-spacing:1.6px">Name</span></td><td><span class="t" id="t-namev" style="letter-spacing:1.2px">node_exporter_entrypoint</span></td></tr>
      <tr style="height:69px"><td><span class="t" id="t-id" style="letter-spacing:1.2px">ID</span></td><td><span class="t id" id="t-idv" style="letter-spacing:0.08px">0s26rvz6ipoq4ii7l24h16lz7</span>
        <a class="btn btn-danger" style="left:327.7px;width:252.6px"><svg viewBox="0 0 448 512" width="20.12" height="23.0"><path fill="#fff" d="M32 464a48 48 0 0 0 48 48h288a48 48 0 0 0 48-48V128H32zm272-256a16 16 0 0 1 32 0v224a16 16 0 0 1-32 0zm-96 0a16 16 0 0 1 32 0v224a16 16 0 0 1-32 0zm-96 0a16 16 0 0 1 32 0v224a16 16 0 0 1-32 0zM432 32H312l-9.4-18.7A24 24 0 0 0 281.1 0H166.8a23.72 23.72 0 0 0-21.4 13.3L136 32H16A16 16 0 0 0 0 48v32a16 16 0 0 0 16 16h416a16 16 0 0 0 16-16V48a16 16 0 0 0-16-16z"/></svg><span id="t-del" style="letter-spacing:0.63px">Delete this config</span></a>
        <a class="btn btn-primary" style="left:595.4px;width:195.2px"><svg viewBox="0 0 448 512" width="20.12" height="23.0"><path fill="#fff" d="M320 448v40c0 13.255-10.745 24-24 24H24c-13.255 0-24-10.745-24-24V120c0-13.255 10.745-24 24-24h72v296c0 30.879 25.121 56 56 56h168zm0-344V0H152c-13.255 0-24 10.745-24 24v368c0 13.255 10.745 24 24 24h272c13.255 0 24-10.745 24-24V128H344c-13.2 0-24-10.8-24-24zm120.971-31.029L375.029 7.029A24 24 0 0 0 358.059 0H352v96h96v-6.059a24 24 0 0 0-7.029-16.97z"/></svg><span id="t-clone" style="letter-spacing:0.86px">Clone config</span></a></td></tr>
      <tr style="height:62px"><td><span class="t" id="t-created" style="letter-spacing:0.87px">Created</span></td><td><span class="t" id="t-createdv" style="letter-spacing:0.2px">2022-02-22 20:25:58</span></td></tr>
      <tr style="height:62px"><td><span class="t" id="t-upd" style="letter-spacing:0.75px">Last updated</span></td><td><span class="t" id="t-updv" style="letter-spacing:0.2px">2022-02-22 20:25:58</span></td></tr>
    </table>
  </section>

  <section class="panel" style="top:541.3px;height:249.5px">
    <div class="hd" style="height:90.7px"><svg class="eye" viewBox="0 0 576 512" width="28.8" height="25.6"><path fill="#fff" d="M572.52 241.4C518.29 135.59 410.93 64 288 64S57.68 135.64 3.48 241.41a32.35 32.35 0 0 0 0 29.19C57.71 376.41 165.07 448 288 448s230.32-71.64 284.52-177.41a32.35 32.35 0 0 0 0-29.19zM288 400a144 144 0 1 1 144-144 143.93 143.93 0 0 1-144 144zm0-240a95.31 95.31 0 0 0-25.31 3.79 47.85 47.85 0 0 1-66.9 66.9A95.78 95.78 0 1 0 288 160z"/></svg><span id="t-h2" style="left:72px;top:26.8px;letter-spacing:1.03px">Access control</span></div>
    <table>
      <colgroup><col style="width:677.5px"><col></colgroup>
      <tr style="height:62px"><td><span class="t" id="t-own" style="letter-spacing:1.0px">Ownership</span></td><td><svg class="es" viewBox="0 0 640 512" width="28.44" height="22.75"><path fill="#fff" d="M320 400c-75.85 0-137.25-58.71-142.9-133.11L72.2 185.82c-13.79 17.3-26.48 35.59-36.72 55.59a32.35 32.35 0 0 0 0 29.19C89.71 376.41 197.07 448 320 448c26.91 0 52.87-4 77.89-10.46L346 397.39a144.13 144.13 0 0 1-26 2.61zm313.82 58.1l-110.55-85.44a331.25 331.25 0 0 0 81.25-102.07 32.35 32.35 0 0 0 0-29.19C550.29 135.59 442.93 64 320 64a308.15 308.15 0 0 0-147.32 37.7L45.46 3.37A16 16 0 0 0 23 6.18L3.37 31.45A16 16 0 0 0 6.18 53.9l588.36 454.73a16 16 0 0 0 22.46-2.81l19.64-25.27a16 16 0 0 0-2.82-22.45zm-183.72-142l-39.3-30.38A94.75 94.75 0 0 0 416 256a94.76 94.76 0 0 0-121.31-92.21A47.65 47.65 0 0 1 304 192a46.64 46.64 0 0 1-1.54 10l-73.61-56.89A142.31 142.31 0 0 1 320 112a143.92 143.92 0 0 1 144 144c0 21.63-5.29 41.79-13.9 60.11z"/></svg><span class="t" id="t-adm" style="margin-left:40.5px;letter-spacing:0.5px">administrators</span></td></tr>
      <tr style="height:62px"><td colspan="2"><a class="chg"><svg class="ed" viewBox="0 0 576 512" width="25.59" height="22.75"><path fill="#3ea5ff" d="M402.6 83.2l90.2 90.2c3.8 3.8 3.8 10 0 13.8L274.4 405.6l-92.8 10.3c-12.4 1.4-22.9-9.1-21.5-21.5l10.3-92.8L388.8 83.2c3.8-3.8 10-3.8 13.8 0zm162-22.9l-48.8-48.8c-15.2-15.2-39.9-15.2-55.2 0l-35.4 35.4c-3.8 3.8-3.8 10 0 13.8l90.2 90.2c3.8 3.8 10 3.8 13.8 0l35.4-35.4c15.2-15.3 15.2-40 0-55.2zM384 346.2V448H64V128h229.8c3.2 0 6.2-1.3 8.5-3.5l40-40c7.6-7.6 2.2-20.5-8.5-20.5H48C21.5 64 0 85.5 0 112v352c0 26.5 21.5 48 48 48h352c26.5 0 48-21.5 48-48V306.2c0-10.7-12.9-16-20.5-8.5l-40 40c-2.2 2.3-3.5 5.3-3.5 8.5z"/></svg><span class="t" id="t-chg" style="margin-left:35.5px;margin-top:13.4px;letter-spacing:0.76px">Change ownership</span></a></td></tr>
    </table>
  </section>

  <section class="panel" style="top:818.4px;height:480px">
    <div class="hd" style="border-bottom:0"><svg class="fc3" viewBox="0 0 384 512" width="19.2" height="25.6"><path fill="#fff" d="M384 121.941V128H256V0h6.059c6.365 0 12.47 2.529 16.971 7.029l97.941 97.941A24.005 24.005 0 0 1 384 121.941zM248 160c-13.2 0-24-10.8-24-24V0H24C10.745 0 0 10.745 0 24v464c0 13.255 10.745 24 24 24h336c13.255 0 24-10.745 24-24V160H248zM123.206 400.505a5.4 5.4 0 0 1-7.633.246l-64.866-60.812a5.4 5.4 0 0 1 0-7.879l64.866-60.812a5.4 5.4 0 0 1 7.633.246l19.579 20.885a5.4 5.4 0 0 1-.372 7.747L101.65 336l40.763 35.874a5.4 5.4 0 0 1 .372 7.747l-19.579 20.884zm51.295 50.479l-27.453-7.97a5.402 5.402 0 0 1-3.681-6.692l61.44-211.626a5.402 5.402 0 0 1 6.692-3.681l27.452 7.97a5.4 5.4 0 0 1 3.68 6.692l-61.44 211.626a5.397 5.397 0 0 1-6.69 3.681zm160.792-111.045l-64.866 60.812a5.4 5.4 0 0 1-7.633-.246l-19.58-20.885a5.4 5.4 0 0 1 .372-7.747L284.35 336l-40.763-35.874a5.4 5.4 0 0 1-.372-7.747l19.58-20.885a5.4 5.4 0 0 1 7.633-.246l64.866 60.812a5.4 5.4 0 0 1-.001 7.879z"/></svg><span id="t-h3" style="top:26.6px;letter-spacing:1.06px">Config content</span></div>
    <div class="cm">
      <div class="gutter"></div>
      <ol>
        <li><i>1</i><code><span class="c">#!/bin/sh -e</span></code></li>
        <li><i>2</i><code></code></li>
        <li><i>3</i><code>NODE_NAME=$(cat /etc/nodename)</code></li>
        <li><i>4</i><code>echo <span class="s">"node_meta{node_id=\"</span>$NODE_ID\<span class="s">", container_label_com_docker_swarm_node_id=\"</span>$NODE_ID\<span class="s">", node_name=\"</span>$NODE_NAME\<span class="s">"} 1"</span> &gt; /etc/node-exporter/node-meta.prom</code></li>
        <li><i>5</i><code></code></li>
        <li><i>6</i><code>set -- /bin/node_exporter <span class="s">"$@"</span></code></li>
        <li><i>7</i><code></code></li>
        <li><i>8</i><code>exec <span class="s">"$@"</span></code></li>
      </ol>
    </div>
  </section>
</div>
</body>
</html>
